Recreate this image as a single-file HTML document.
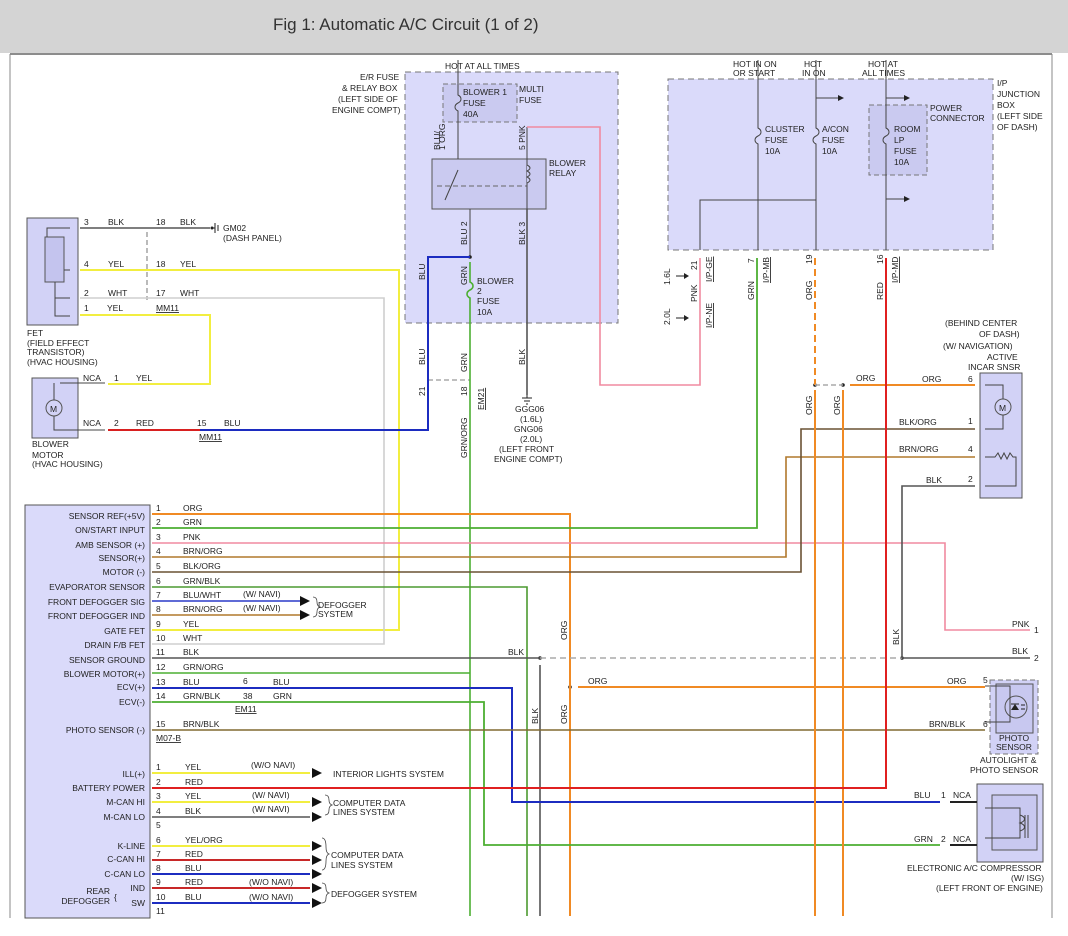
<!DOCTYPE html>
<html><head><meta charset="utf-8"><style>
html,body{margin:0;padding:0;background:#fff;width:1068px;height:936px;overflow:hidden}
svg text{font-family:"Liberation Sans",sans-serif;font-size:8.5px;fill:#222}
.t{font-size:17px;fill:#333}
</style></head><body>
<svg width="1068" height="936" viewBox="0 0 1068 936" xmlns="http://www.w3.org/2000/svg">
<rect x="0" y="0" width="1068" height="53" fill="#d4d4d4"/>
<text class="t" x="273" y="30" font-size="17">Fig 1: Automatic A/C Circuit (1 of 2)</text>
<line x1="10" y1="54" x2="1052" y2="54" stroke="#666" stroke-width="1.5"/>
<line x1="10" y1="54" x2="10" y2="918" stroke="#888"/>
<line x1="1052" y1="54" x2="1052" y2="918" stroke="#888"/>

<!-- boxes -->
<rect x="405" y="72" width="213" height="251" fill="#dadafa" stroke="#777" stroke-dasharray="6,4"/>
<rect x="443" y="84" width="74" height="38" fill="#cacaf0" stroke="#777" stroke-dasharray="5,3"/>
<rect x="432" y="159" width="114" height="50" fill="#cacaf0" stroke="#555"/>
<line x1="437" y1="186" x2="527" y2="186" stroke="#666" stroke-dasharray="5,3"/>
<rect x="668" y="79" width="325" height="171" fill="#dadafa" stroke="#777" stroke-dasharray="6,4"/>
<rect x="869" y="105" width="58" height="70" fill="#cacaf0" stroke="#777" stroke-dasharray="5,3"/>
<rect x="27" y="218" width="51" height="107" fill="#d2d2f6" stroke="#555"/>
<rect x="45" y="237" width="19" height="45" fill="#c4c4ee" stroke="#555"/>
<rect x="32" y="378" width="46" height="60" fill="#d2d2f6" stroke="#555"/>
<circle cx="54" cy="408" r="8" fill="#d2d2f6" stroke="#555"/><text x="50" y="412" font-size="10">M</text>
<rect x="25" y="505" width="125" height="413" fill="#dadafa" stroke="#555"/>
<rect x="980" y="373" width="42" height="125" fill="#d2d2f6" stroke="#555"/>
<circle cx="1003" cy="407" r="8" fill="#d2d2f6" stroke="#555"/><text x="999" y="411" font-size="10">M</text>
<rect x="990" y="680" width="48" height="74" fill="#d2d2f6" stroke="#777" stroke-dasharray="5,3"/>
<rect x="996" y="684" width="37" height="49" fill="#c8c8f0" stroke="#555"/>
<circle cx="1016" cy="707" r="11" fill="none" stroke="#555"/>
<path d="M1011 710h8l-4 -6z" fill="#222"/><path d="M1011 704h8M1021 705h4M1021 709h4" stroke="#222"/>
<rect x="977" y="784" width="66" height="78" fill="#d2d2f6" stroke="#555"/>
<rect x="992" y="795" width="45" height="55" fill="#c8c8f0" stroke="#555"/>

<!-- inner component lines -->
<g stroke="#444" fill="none" stroke-width="1">
<path d="M70 228H47V237M55 282V316H70M55 298H70M64 270H70"/>
<path d="M60 383H105M54 383V400M54 416V430H105"/>
<path d="M458 60V95c4 2 4 6 0 8c-4 2-4 6 0 8V159M470 209V257M527 127V209"/>
<path d="M470 262V282c4 2 4 6 0 8c-4 2-4 6 0 8V316" stroke="#4caf32" stroke-width="1.6"/>
<path d="M527 165c4 2 4 4 0 6c4 2 4 4 0 6c4 2 4 4 0 6" fill="#cacaf0"/>
<path d="M458 170L445 200"/>
<path d="M758 60V128c4 2 4 6 0 8c-4 2-4 6 0 8V250M816 60V128c4 2 4 6 0 8c-4 2-4 6 0 8V250M886 60V128c4 2 4 6 0 8c-4 2-4 6 0 8V250M816 200H700V250M816 98H838M886 98H904M886 199H904"/>
<path d="M985 385H1003V399M1003 415V429H985M985 457H995l3-4 3 6 3-6 3 6 3-6 3 4H1016V486H985"/>
<path d="M985 686H1010V722H985M985 808H1020V838H985"/>
<path d="M1020 815c6 2 6 6 0 8c6 2 6 6 0 8M1025 815V838M1028 815V838"/>
</g>
<g fill="#222"><path d="M838 95l6 3-6 3zM904 95l6 3-6 3zM904 196l6 3-6 3z"/>
<circle cx="470" cy="257" r="1.8"/><circle cx="540" cy="658" r="1.8"/><circle cx="570" cy="687" r="1.8"/>
<circle cx="815" cy="385" r="1.8"/><circle cx="843" cy="385" r="1.8"/><circle cx="902" cy="658" r="1.8"/></g>

<!-- wires -->
<g fill="none" stroke-width="1.6">
<path d="M80 228H210" stroke="#555"/>
<line x1="147" y1="232" x2="147" y2="300" stroke="#aaa" stroke-dasharray="5,3"/>
<line x1="428" y1="380" x2="470" y2="380" stroke="#aaa" stroke-dasharray="5,3"/>
<path d="M80 270H399V630H152" stroke="#f2ee40" stroke-width="2"/>
<path d="M80 298H384V644H152" stroke="#cfcfcf"/>
<path d="M80 315H210V384H108" stroke="#f2ee40" stroke-width="2"/>
<path d="M108 430H200" stroke="#d82020" stroke-width="2"/>
<path d="M200 430H428V257H470" stroke="#1c2cc0" stroke-width="2"/>
<path d="M470 316V916" stroke="#4caf32"/>
<path d="M527 209V395" stroke="#555"/>
<path d="M527 127H600V385H700V258" stroke="#f08aa0"/>
<path d="M152 514H570V916" stroke="#f08a24" stroke-width="2"/>
<path d="M152 528H757V258" stroke="#4caf32" stroke-width="1.8"/>
<path d="M152 543H945V630H1030" stroke="#f08aa0"/>
<path d="M152 557H786V457H975" stroke="#b0782c"/>
<path d="M152 572H801V429H975" stroke="#6a5234"/>
<path d="M152 587H527V916" stroke="#4c9a30"/>
<path d="M152 601H305" stroke="#2a3ac8"/>
<path d="M152 615H305" stroke="#b0782c"/>
<path d="M152 658H540M540 665V916" stroke="#555"/>
<line x1="540" y1="658" x2="902" y2="658" stroke="#aaa" stroke-dasharray="6,4"/>
<path d="M902 658H1030M902 658V486H975" stroke="#555"/>
<path d="M152 673H470" stroke="#4caf32"/>
<path d="M152 688H512V802H940" stroke="#1c2cc0" stroke-width="2"/>
<path d="M152 702H484V845H940" stroke="#4caf32" stroke-width="1.8"/>
<path d="M578 687H985" stroke="#f08a24" stroke-width="2"/>
<path d="M152 730H985" stroke="#806a30"/>
<path d="M815 258V385" stroke="#f08a24" stroke-width="2" stroke-dasharray="7,4"/>
<line x1="815" y1="385" x2="843" y2="385" stroke="#aaa" stroke-dasharray="5,3"/>
<path d="M850 385H975" stroke="#f08a24" stroke-width="2"/>
<path d="M815 390V916M843 390V916" stroke="#f08a24" stroke-width="2"/>
<path d="M152 788H886V258" stroke="#e02020" stroke-width="2"/>
<path d="M152 773H310M152 802H310M152 846H310" stroke="#f2ee40" stroke-width="2"/>
<path d="M152 817H310" stroke="#555"/>
<path d="M152 860H310M152 888H310" stroke="#c82828" stroke-width="2"/>
<path d="M152 874H310M152 903H310" stroke="#1c2cc0" stroke-width="2"/>
<path d="M950 802H977M950 845H977" stroke="#222" stroke-width="2"/>
</g>
<g fill="#111"><path d="M300 596l10 5-10 5zM300 610l10 5-10 5zM312 768l10 5-10 5zM312 797l10 5-10 5zM312 812l10 5-10 5zM312 841l10 5-10 5zM312 855l10 5-10 5zM312 869l10 5-10 5zM312 883l10 5-10 5zM312 898l10 5-10 5z"/></g>

<!-- labels -->
<text x="445" y="69">HOT AT ALL TIMES</text>
<text x="360" y="80">E/R FUSE</text><text x="342" y="91">&amp; RELAY BOX</text><text x="338" y="102">(LEFT SIDE OF</text><text x="332" y="113">ENGINE COMPT)</text>
<text x="463" y="95">BLOWER 1</text><text x="463" y="106">FUSE</text><text x="463" y="117">40A</text>
<text x="519" y="92">MULTI</text><text x="519" y="103">FUSE</text>
<text x="549" y="166">BLOWER</text><text x="549" y="176">RELAY</text>
<text x="477" y="284">BLOWER</text><text x="477" y="294">2</text><text x="477" y="304">FUSE</text><text x="477" y="315">10A</text>
<g font-size="8.5">
<text transform="translate(445,150) rotate(-90)">1 ORG</text><text transform="translate(440,150) rotate(-90)">BLU/</text>
<text transform="translate(525,150) rotate(-90)">5  PNK</text>
<text transform="translate(467,245) rotate(-90)">BLU  2</text>
<text transform="translate(525,245) rotate(-90)">BLK  3</text>
<text transform="translate(425,280) rotate(-90)">BLU</text>
<text transform="translate(467,285) rotate(-90)">GRN</text>
<text transform="translate(425,365) rotate(-90)">BLU</text>
<text transform="translate(467,372) rotate(-90)">GRN</text>
<text transform="translate(525,365) rotate(-90)">BLK</text>
<text transform="translate(425,396) rotate(-90)">21</text>
<text transform="translate(467,396) rotate(-90)">18</text>
<text transform="translate(484,410) rotate(-90)" text-decoration="underline">EM21</text>
<text transform="translate(467,458) rotate(-90)">GRN/ORG</text>
<text transform="translate(697,302) rotate(-90)">PNK</text>
<text transform="translate(697,270) rotate(-90)">21</text>
<text transform="translate(712,282) rotate(-90)" text-decoration="underline">I/P-GE</text>
<text transform="translate(712,328) rotate(-90)" text-decoration="underline">I/P-NE</text>
<text transform="translate(670,285) rotate(-90)">1.6L</text>
<text transform="translate(670,325) rotate(-90)">2.0L</text>
<text transform="translate(754,300) rotate(-90)">GRN</text>
<text transform="translate(754,263) rotate(-90)">7</text>
<text transform="translate(769,283) rotate(-90)" text-decoration="underline">I/P-MB</text>
<text transform="translate(812,300) rotate(-90)">ORG</text>
<text transform="translate(812,264) rotate(-90)">19</text>
<text transform="translate(883,300) rotate(-90)">RED</text>
<text transform="translate(883,264) rotate(-90)">16</text>
<text transform="translate(898,283) rotate(-90)" text-decoration="underline">I/P-MD</text>
<text transform="translate(812,415) rotate(-90)">ORG</text>
<text transform="translate(840,415) rotate(-90)">ORG</text>
<text transform="translate(899,645) rotate(-90)">BLK</text>
<text transform="translate(567,640) rotate(-90)">ORG</text>
<text transform="translate(567,724) rotate(-90)">ORG</text>
<text transform="translate(538,724) rotate(-90)">BLK</text>
</g>
<path d="M676 276h8M676 318h8" stroke="#222"/><path d="M684 273l5 3-5 3zM684 315l5 3-5 3z" fill="#222"/>
<path d="M527 395v3M522 398h10M524 401h6M526 404h2" stroke="#222"/>
<text x="515" y="412">GGG06</text><text x="520" y="422">(1.6L)</text><text x="514" y="432">GNG06</text><text x="520" y="442">(2.0L)</text><text x="499" y="452">(LEFT FRONT</text><text x="494" y="462">ENGINE COMPT)</text>
<text x="733" y="67">HOT IN ON</text><text x="733" y="76">OR START</text><text x="804" y="67">HOT</text><text x="802" y="76">IN ON</text>
<text x="868" y="67">HOT AT</text><text x="862" y="76">ALL TIMES</text>
<text x="997" y="86">I/P</text><text x="997" y="97">JUNCTION</text><text x="997" y="108">BOX</text><text x="997" y="119">(LEFT SIDE</text><text x="997" y="130">OF DASH)</text>
<text x="930" y="111">POWER</text><text x="930" y="121">CONNECTOR</text>
<text x="765" y="132">CLUSTER</text><text x="765" y="143">FUSE</text><text x="765" y="154">10A</text>
<text x="822" y="132">A/CON</text><text x="822" y="143">FUSE</text><text x="822" y="154">10A</text>
<text x="894" y="132">ROOM</text><text x="894" y="143">LP</text><text x="894" y="154">FUSE</text><text x="894" y="165">10A</text>
<text x="945" y="326">(BEHIND CENTER</text><text x="979" y="337">OF DASH)</text><text x="943" y="349">(W/ NAVIGATION)</text><text x="987" y="360">ACTIVE</text><text x="968" y="370">INCAR SNSR</text>
<text x="856" y="381">ORG</text><text x="922" y="382">ORG</text><text x="968" y="382">6</text>
<text x="899" y="425">BLK/ORG</text><text x="968" y="424">1</text>
<text x="899" y="452">BRN/ORG</text><text x="968" y="452">4</text>
<text x="926" y="483">BLK</text><text x="968" y="482">2</text>
<text x="1012" y="627">PNK</text><text x="1034" y="633">1</text>
<text x="1012" y="654">BLK</text><text x="1034" y="661">2</text>
<text x="508" y="655">BLK</text>
<text x="588" y="684">ORG</text><text x="947" y="684">ORG</text><text x="983" y="683">5</text>
<text x="929" y="727">BRN/BLK</text><text x="983" y="727">6</text>
<text x="999" y="741">PHOTO</text><text x="996" y="750">SENSOR</text>
<text x="980" y="763">AUTOLIGHT &amp;</text><text x="970" y="773">PHOTO SENSOR</text>
<text x="914" y="798">BLU</text><text x="941" y="798">1</text><text x="953" y="798">NCA</text>
<text x="914" y="842">GRN</text><text x="941" y="842">2</text><text x="953" y="842">NCA</text>
<text x="907" y="871">ELECTRONIC A/C COMPRESSOR</text><text x="1011" y="881">(W/ ISG)</text><text x="936" y="891">(LEFT FRONT OF ENGINE)</text>
<text x="84" y="225">3</text><text x="108" y="225">BLK</text><text x="156" y="225">18</text><text x="180" y="225">BLK</text>
<text x="223" y="231">GM02</text><text x="223" y="241">(DASH PANEL)</text>
<circle cx="212" cy="228" r="1.5" fill="#222"/><path d="M212 228h3M215 223v10M218 225v6" stroke="#222"/>
<text x="84" y="267">4</text><text x="108" y="267">YEL</text><text x="156" y="267">18</text><text x="180" y="267">YEL</text>
<text x="84" y="296">2</text><text x="108" y="296">WHT</text><text x="156" y="296">17</text><text x="180" y="296">WHT</text>
<text x="84" y="311">1</text><text x="107" y="311">YEL</text><text x="156" y="311" text-decoration="underline">MM11</text>
<text x="27" y="336">FET</text><text x="27" y="346">(FIELD EFFECT</text><text x="27" y="355">TRANSISTOR)</text><text x="27" y="365">(HVAC HOUSING)</text>
<text x="83" y="381">NCA</text><text x="114" y="381">1</text><text x="136" y="381">YEL</text>
<text x="83" y="426">NCA</text><text x="114" y="426">2</text><text x="136" y="426">RED</text>
<text x="197" y="426">15</text><text x="224" y="426">BLU</text><text x="199" y="440" text-decoration="underline">MM11</text>
<text x="32" y="447">BLOWER</text><text x="32" y="458">MOTOR</text><text x="32" y="467">(HVAC HOUSING)</text>
<g text-anchor="end">
<text x="145" y="519">SENSOR REF(+5V)</text><text x="145" y="533">ON/START INPUT</text><text x="145" y="548">AMB SENSOR (+)</text><text x="145" y="561">SENSOR(+)</text><text x="145" y="575">MOTOR (-)</text><text x="145" y="590">EVAPORATOR SENSOR</text><text x="145" y="605">FRONT DEFOGGER SIG</text><text x="145" y="619">FRONT DEFOGGER IND</text><text x="145" y="634">GATE FET</text><text x="145" y="648">DRAIN F/B FET</text><text x="145" y="663">SENSOR GROUND</text><text x="145" y="677">BLOWER MOTOR(+)</text><text x="145" y="690">ECV(+)</text><text x="145" y="705">ECV(-)</text><text x="145" y="733">PHOTO SENSOR (-)</text>
<text x="145" y="777">ILL(+)</text><text x="145" y="791">BATTERY POWER</text><text x="145" y="805">M-CAN HI</text><text x="145" y="820">M-CAN LO</text><text x="145" y="849">K-LINE</text><text x="145" y="862">C-CAN HI</text><text x="145" y="877">C-CAN LO</text><text x="145" y="891">IND</text><text x="145" y="906">SW</text><text x="110" y="894">REAR</text><text x="110" y="904">DEFOGGER</text>
</g>
<text x="114" y="900" font-size="14">{</text>
<g>
<text x="156" y="511">1</text><text x="183" y="511">ORG</text>
<text x="156" y="525">2</text><text x="183" y="525">GRN</text>
<text x="156" y="540">3</text><text x="183" y="540">PNK</text>
<text x="156" y="554">4</text><text x="183" y="554">BRN/ORG</text>
<text x="156" y="569">5</text><text x="183" y="569">BLK/ORG</text>
<text x="156" y="584">6</text><text x="183" y="584">GRN/BLK</text>
<text x="156" y="598">7</text><text x="183" y="598">BLU/WHT</text><text x="243" y="597">(W/ NAVI)</text>
<text x="156" y="612">8</text><text x="183" y="612">BRN/ORG</text><text x="243" y="611">(W/ NAVI)</text>
<text x="156" y="627">9</text><text x="183" y="627">YEL</text>
<text x="156" y="641">10</text><text x="183" y="641">WHT</text>
<text x="156" y="655">11</text><text x="183" y="655">BLK</text>
<text x="156" y="670">12</text><text x="183" y="670">GRN/ORG</text>
<text x="156" y="685">13</text><text x="183" y="685">BLU</text><text x="243" y="684">6</text><text x="273" y="685">BLU</text>
<text x="156" y="699">14</text><text x="183" y="699">GRN/BLK</text><text x="243" y="699">38</text><text x="273" y="699">GRN</text><text x="235" y="712" text-decoration="underline">EM11</text>
<text x="156" y="727">15</text><text x="183" y="727">BRN/BLK</text><text x="156" y="741" text-decoration="underline">M07-B</text>
<text x="156" y="770">1</text><text x="185" y="770">YEL</text><text x="251" y="768">(W/O NAVI)</text>
<text x="156" y="785">2</text><text x="185" y="785">RED</text>
<text x="156" y="799">3</text><text x="185" y="799">YEL</text><text x="252" y="798">(W/ NAVI)</text>
<text x="156" y="814">4</text><text x="185" y="814">BLK</text><text x="252" y="812">(W/ NAVI)</text>
<text x="156" y="828">5</text>
<text x="156" y="843">6</text><text x="185" y="843">YEL/ORG</text>
<text x="156" y="857">7</text><text x="185" y="857">RED</text>
<text x="156" y="871">8</text><text x="185" y="871">BLU</text>
<text x="156" y="885">9</text><text x="185" y="885">RED</text><text x="249" y="885">(W/O NAVI)</text>
<text x="156" y="900">10</text><text x="185" y="900">BLU</text><text x="249" y="900">(W/O NAVI)</text>
<text x="156" y="914">11</text>
<text x="318" y="608">DEFOGGER</text><text x="318" y="617">SYSTEM</text>
<text x="333" y="777">INTERIOR LIGHTS SYSTEM</text>
<text x="333" y="806">COMPUTER DATA</text><text x="333" y="815">LINES SYSTEM</text>
<text x="331" y="858">COMPUTER DATA</text><text x="331" y="868">LINES SYSTEM</text>
<text x="331" y="897">DEFOGGER SYSTEM</text>
</g>
<g fill="none" stroke="#444" stroke-width="0.8">
<path d="M313 597q4 0 4 5 0 4 3 5-3 1-3 5 0 5-4 5M325 795q4 0 4 5 0 4 3 5-3 1-3 5 0 5-4 5M322 838q4 0 4 9 0 6 3 7-3 1-3 7 0 9-4 9M322 883q4 0 4 5 0 4 3 5-3 1-3 5 0 5-4 5"/>
</g>
</svg>
</body></html>
